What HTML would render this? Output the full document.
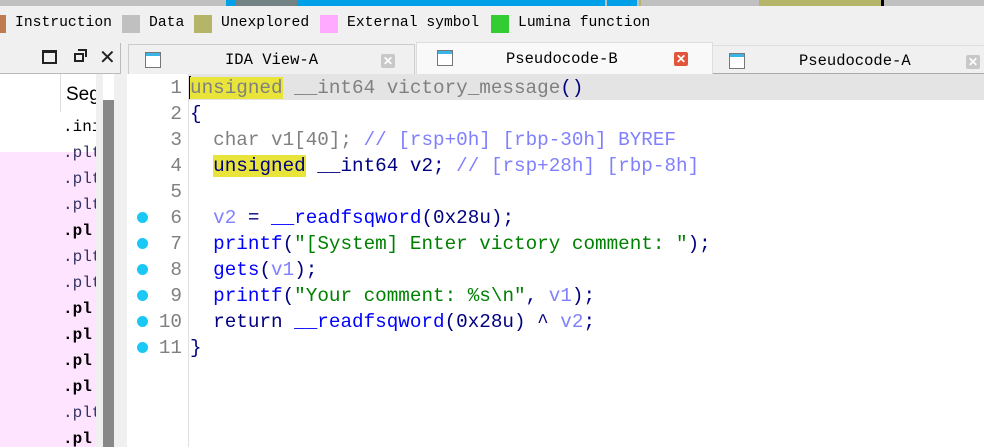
<!DOCTYPE html>
<html><head><style>
*{margin:0;padding:0;box-sizing:border-box}
html,body{width:984px;height:447px;overflow:hidden}
body{background:#f0f0f0;font-family:"Liberation Mono",monospace;position:relative}
.a{position:absolute}
.leg{font-family:"Liberation Mono",monospace;font-size:14.7px;color:#000;top:15px}
.sw{position:absolute;top:15px;width:18px;height:18px}
.code{font-size:19.3px;line-height:26px}
.code>div{white-space:pre;height:26px}
.ln{position:absolute;right:0;width:60px;text-align:right;color:#808080;white-space:pre}
.dot{position:absolute;left:137px;width:11px;height:11px;border-radius:50%;background:#1ac8f5}
.tab{position:absolute;top:44px;height:30px;font-size:15.5px;font-family:"Liberation Mono",monospace}
.ico{position:absolute;top:7px;width:16px;height:16px;border:1px solid #777;background:#fff}
.ico:before{content:"";position:absolute;left:0;right:0;top:0;height:3px;background:#3bb5e8}
.cl{position:absolute;top:9px;width:14px;height:14px;border-radius:2px;color:#fff;font-size:12px;line-height:14px;text-align:center;font-family:"Liberation Sans",sans-serif;font-weight:bold}
.bl{color:#0000ff}.gr{color:#808080}.lv{color:#8080ff}.st{color:#008000}.nv{color:#000080}
.hl{background:#e8e43a}
.seg div{height:26px}
</style></head><body>
<div class="a" style="left:0;top:0;width:984px;height:6px;background:#c0c0c0"></div>
<div class="a" style="left:226px;top:0;width:354px;height:6px;background:#00a0e8"></div>
<div class="a" style="left:235px;top:0;width:62px;height:6px;background:#c07040;opacity:.6"></div>
<div class="a" style="left:580px;top:0;width:25px;height:6px;background:#00a0e8"></div>
<div class="a" style="left:607px;top:0;width:30px;height:6px;background:#00a0e8"></div>
<div class="a" style="left:639px;top:0;width:2px;height:6px;background:#b5b56a"></div>
<div class="a" style="left:759px;top:0;width:122px;height:6px;background:#b5b56a"></div>
<div class="a" style="left:881px;top:0;width:3px;height:6px;background:#000"></div>
<div class="sw" style="left:0;width:6px;background:#c07a50"></div>
<div class="a leg" style="left:15px">Instruction</div>
<div class="sw" style="left:122px;background:#c0c0c0"></div>
<div class="a leg" style="left:149px">Data</div>
<div class="sw" style="left:194px;background:#b5b56a"></div>
<div class="a leg" style="left:221px">Unexplored</div>
<div class="sw" style="left:320px;background:#ffaaff"></div>
<div class="a leg" style="left:347px">External symbol</div>
<div class="sw" style="left:491px;background:#33cc33"></div>
<div class="a leg" style="left:518px">Lumina function</div>
<div class="a" style="left:0;top:43px;width:121px;height:404px;background:#fff;border-right:1px solid #bbb"></div>
<div class="a" style="left:0;top:43px;width:121px;height:31px;background:#f0f0f0;border-bottom:1px solid #bbb;border-right:1px solid #bbb"></div>
<div class="a" style="left:42px;top:50px;width:15px;height:14px;border:2px solid #222;border-top-width:3px"></div>
<div class="a" style="left:74px;top:53px;width:10px;height:9px;border:2px solid #222"></div>
<div class="a" style="left:78px;top:49px;width:9px;height:8px;border:2px solid #222;border-left:none;border-bottom:none"></div>
<div class="a" style="left:99px;top:45px;font-family:'Liberation Sans',sans-serif;font-size:20px;color:#222">✕</div>
<div class="a" style="left:60px;top:74px;width:1px;height:38px;background:#ddd"></div>
<div class="a" style="left:0;top:152px;width:96px;height:295px;background:#ffe4ff"></div>
<div class="a" style="left:96px;top:74px;width:7px;height:373px;background:#f0f0f0"></div>
<div class="a" style="left:103px;top:100px;width:11px;height:347px;background:#888"></div>
<div class="a" style="left:114px;top:74px;width:7px;height:373px;background:#f0f0f0"></div>
<div class="a" style="left:66px;top:84px;font-family:'Liberation Sans',sans-serif;font-size:19px;color:#000;width:30px;overflow:hidden">Seg</div>
<div class="a seg" style="left:63px;top:114px;width:33px;height:333px;overflow:hidden;font-family:'Liberation Mono',monospace;font-size:16px;line-height:26px;color:#000"><div>.ini</div><div style="color:#336">.plt</div><div style="color:#336">.plt</div><div style="color:#336">.plt</div><div><b>.pl</b></div><div style="color:#336">.plt</div><div style="color:#336">.plt</div><div><b>.pl</b></div><div><b>.pl</b></div><div><b>.pl</b></div><div><b>.pl</b></div><div style="color:#336">.plt</div><div><b>.pl</b></div><div><b>.pl</b></div><div><b>.pl</b></div><div><b>.pl</b></div><div><b>.pl</b></div></div>
<div class="a" style="left:127px;top:74px;width:857px;height:373px;background:#fff"></div>
<div class="tab" style="left:128px;width:287px;background:#f0f0f0;border:1px solid #ccc;border-bottom:none"><div class="ico" style="left:16px"></div><div class="a" style="left:96px;top:6px">IDA View-A</div><div class="cl" style="left:252px;background:#c8c8c8">✕</div></div>
<div class="tab" style="left:416px;width:297px;top:42px;height:32px;background:#f9f9f9;border:1px solid #ddd;border-bottom:none"><div class="ico" style="left:20px;top:7px"></div><div class="a" style="left:89px;top:7px">Pseudocode-B</div><div class="cl" style="left:257px;top:9px;background:#e2553c">✕</div></div>
<div class="tab" style="left:713px;width:271px;top:45px;height:29px;background:#f0f0f0;border-top:1px solid #ddd;border-bottom:1px solid #aaa"><div class="ico" style="left:16px"></div><div class="a" style="left:86px;top:6px">Pseudocode-A</div><div class="cl" style="left:253px;background:#c8c8c8">✕</div></div>
<div class="a" style="left:188px;top:74px;width:796px;height:26px;background:#e4e4e4"></div>
<div class="a" style="left:188px;top:74px;width:1px;height:373px;background:#e0e0e0"></div>
<div class="a" style="left:189px;top:76px;width:2px;height:23px;background:#000"></div>
<div class="a code" style="left:121px;top:75px;width:61px;height:290px"><div class="ln" style="top:0">1</div><div class="ln" style="top:26px">2</div><div class="ln" style="top:52px">3</div><div class="ln" style="top:78px">4</div><div class="ln" style="top:104px">5</div><div class="ln" style="top:130px">6</div><div class="ln" style="top:156px">7</div><div class="ln" style="top:182px">8</div><div class="ln" style="top:208px">9</div><div class="ln" style="top:234px">10</div><div class="ln" style="top:260px">11</div></div>
<div class="dot" style="top:212px"></div><div class="dot" style="top:238px"></div><div class="dot" style="top:264px"></div><div class="dot" style="top:290px"></div><div class="dot" style="top:316px"></div><div class="dot" style="top:342px"></div>
<div class="a code" style="left:190px;top:75px;color:#000"><div class="gr"><span class="hl">unsigned</span> __int64 victory_message<span class="nv">()</span></div><div class="nv">{</div><div>  <span class="gr">char v1[40];</span> <span class="lv">// [rsp+0h] [rbp-30h] BYREF</span></div><div>  <span class="nv"><span class="hl">unsigned</span> __int64 v2;</span> <span class="lv">// [rsp+28h] [rbp-8h]</span></div><div> </div><div>  <span class="lv">v2</span> <span class="nv">= </span><span class="bl">__readfsqword</span><span class="nv">(0x28u);</span></div><div>  <span class="bl">printf</span><span class="nv">(</span><span class="st">"[System] Enter victory comment: "</span><span class="nv">);</span></div><div>  <span class="bl">gets</span><span class="nv">(</span><span class="lv">v1</span><span class="nv">);</span></div><div>  <span class="bl">printf</span><span class="nv">(</span><span class="st">"Your comment: %s\n"</span><span class="nv">, </span><span class="lv">v1</span><span class="nv">);</span></div><div>  <span class="nv">return </span><span class="bl">__readfsqword</span><span class="nv">(0x28u) ^ </span><span class="lv">v2</span><span class="nv">;</span></div><div class="nv">}</div></div>
</body></html>
